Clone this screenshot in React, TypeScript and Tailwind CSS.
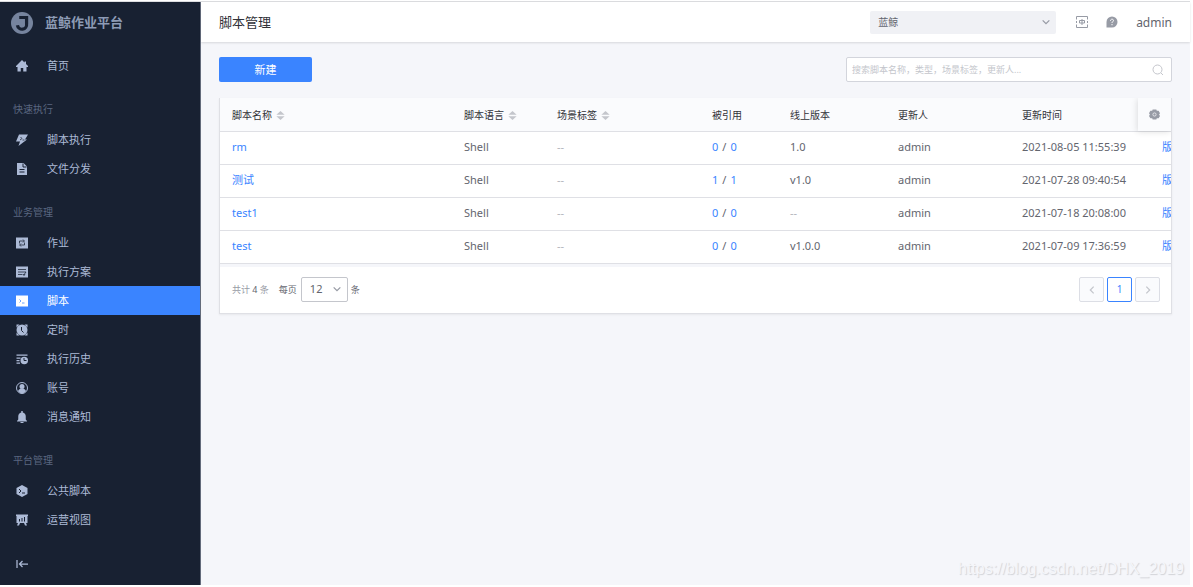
import React from "react";

type IconProps = { className?: string };

const Svg: React.FC<{ className?: string; children: React.ReactNode }> = ({
  className = "size-3",
  children,
}) => (
  <svg viewBox="0 0 24 24" fill="currentColor" className={className} aria-hidden="true">
    {children}
  </svg>
);

const HomeIcon = () => (
  <Svg>
    <path d="M12 0 0 12v2h3v9h6.500v-7h5v7H21v-9h3v-2L20 8V3h-3v2z" />
  </Svg>
);

const FlashIcon = () => (
  <Svg>
    <path d="M6 1h18l-6 10h4L5 24l3-9H0z" />
    <path d="m9 6 3 3-4 3M13 12h4" fill="none" stroke="#182132" strokeWidth="1.500" />
  </Svg>
);

const FileIcon = () => (
  <Svg>
    <path d="M2 0h13l7 7v17H2z" />
    <path d="M14 1v7h7M7 13h10M7 18h10" fill="none" stroke="#182132" strokeWidth="2" />
  </Svg>
);

const JobIcon = () => (
  <Svg>
    <path d="M0 1h24v22H0z" />
    <path
      d="M7 13V8h9M14 5l3 3-3 3M17 11v5H8M10 13l-3 3 3 3"
      fill="none"
      stroke="#182132"
      strokeWidth="1.500"
    />
  </Svg>
);

const PlanIcon = () => (
  <Svg>
    <path d="M0 1h24v22H0z" />
    <path
      d="M4 7h16M4 12h16l-3 4M4 17h8M13 17h5l-3 3"
      fill="none"
      stroke="#182132"
      strokeWidth="1.500"
    />
  </Svg>
);

const ScriptIcon = () => (
  <Svg>
    <path d="M0 1h24v22H0z" />
    <path d="m7 9 3 3-3 3M12 16h5" fill="none" stroke="#3a84ff" strokeWidth="1.500" />
  </Svg>
);

const ClockIcon = () => (
  <Svg>
    <path d="M1 1h6L1 7zM23 1h-6l6 6zM1 23h6l-6-6zM23 23h-6l6-6z" />
    <circle cx="12" cy="12" r="11" />
    <path d="M11 6v7l4 4" fill="none" stroke="#182132" strokeWidth="2" />
  </Svg>
);

const HistoryIcon = () => (
  <Svg>
    <path d="M1 3h22v2.500H1zM1 9h8v2.500H1zM1 14h6v2.500H1zM1 19h7v2.500H1z" />
    <circle cx="16.500" cy="15" r="7.500" />
    <path d="M16 10v5h5" fill="none" stroke="#182132" strokeWidth="2" />
  </Svg>
);

const AccountIcon = () => (
  <Svg>
    <circle cx="12" cy="12" r="11" fill="none" stroke="currentColor" strokeWidth="2" />
    <circle cx="12" cy="9" r="5" />
    <path d="M4 18c2-4 5-5 8-5s6 1 8 5c-2 3-5 5-8 5s-6-2-8-5z" />
  </Svg>
);

const BellIcon = () => (
  <Svg>
    <path d="M10.500 0h3v3c4 1 6 4 6 8v6l2.500 3v1H2v-1l2.500-3v-6c0-4 2-7 6-8zM9 22h6v2H9z" />
  </Svg>
);

const PublicIcon = () => (
  <Svg>
    <path d="m12 0 11 6v12l-11 6-11-6V6z" />
    <path d="m6 8 4 4-4 4M12 16h6" fill="none" stroke="#182132" strokeWidth="2" />
  </Svg>
);

const ChartIcon = () => (
  <Svg>
    <path d="M0 1h24v3h-1v14h-3l2 5h-4l-2-5H8l-2 5H2l2-5H1V4H0z" />
    <path d="M7 10v5M12 8v7M17 6v9" stroke="#182132" strokeWidth="2" />
  </Svg>
);

const CollapseIcon = () => (
  <Svg>
    <path d="M2 4v16M7 12h17M13 6l-6 6 6 6" fill="none" stroke="currentColor" strokeWidth="2.500" />
  </Svg>
);

const LogoIcon = () => (
  <Svg className="size-[22px]">
    <circle cx="12" cy="12" r="12" fill="#76849e" />
    <path d="M9 6h8v7a5 5 0 0 1-10 1.500" fill="none" stroke="#182132" strokeWidth="3.500" />
  </Svg>
);

const LanguageIcon = () => (
  <Svg className="size-3">
    <path
      d="M1 7V1h22v6M1 17v6h22v-6M1 10v4M23 10v4"
      fill="none"
      stroke="currentColor"
      strokeWidth="2"
    />
    <path d="M7 9h10v5H7zM12 6v12" fill="none" stroke="currentColor" strokeWidth="2" />
  </Svg>
);

const HelpIcon = () => (
  <Svg className="size-3">
    <path d="M12 1a11 11 0 1 1 0 22H1V12A11 11 0 0 1 12 1z" />
    <path
      d="M9 9.500c0-4 6-4 6-.5 0 2-3 2.500-3 5M12 16v2.500"
      fill="none"
      stroke="#fff"
      strokeWidth="2"
    />
  </Svg>
);

const GearIcon = () => (
  <Svg className="size-[11px]">
    <path d="M8 1h8l1 3h4l3 5-2 3 2 3-3 5h-4l-1 3H8l-1-3H3l-3-5 2-3-2-3 3-5h4z" />
    <circle cx="12" cy="12" r="3.500" fill="none" stroke="#fafbfd" strokeWidth="1.500" />
  </Svg>
);

const SearchIcon = () => (
  <Svg className="size-3">
    <circle cx="11" cy="11" r="9" fill="none" stroke="currentColor" strokeWidth="2" />
    <path d="m18 18 4 4" stroke="currentColor" strokeWidth="2" />
  </Svg>
);

const Chevron: React.FC<IconProps> = ({ className }) => (
  <Svg className={className}>
    <path d="m4 8 8 8 8-8" fill="none" stroke="currentColor" strokeWidth="3" />
  </Svg>
);

const SortIcon = () => (
  <Svg className="size-[9px] text-[#c4c6cc]">
    <path d="M12 0 23 10H1zM12 24 1 14h22z" />
  </Svg>
);

const groups = [
  { title: "", items: [{ name: "首页", Icon: HomeIcon }] },
  {
    title: "快速执行",
    items: [
      { name: "脚本执行", Icon: FlashIcon },
      { name: "文件分发", Icon: FileIcon },
    ],
  },
  {
    title: "业务管理",
    items: [
      { name: "作业", Icon: JobIcon },
      { name: "执行方案", Icon: PlanIcon },
      { name: "脚本", Icon: ScriptIcon, active: true },
      { name: "定时", Icon: ClockIcon },
      { name: "执行历史", Icon: HistoryIcon },
      { name: "账号", Icon: AccountIcon },
      { name: "消息通知", Icon: BellIcon },
    ],
  },
  {
    title: "平台管理",
    items: [
      { name: "公共脚本", Icon: PublicIcon },
      { name: "运营视图", Icon: ChartIcon },
    ],
  },
];

const columns = [
  { name: "脚本名称", width: "w-[232px]", sort: true },
  { name: "脚本语言", width: "w-[93px]", sort: true },
  { name: "场景标签", width: "w-[155px]", sort: true },
  { name: "被引用", width: "w-[78px]" },
  { name: "线上版本", width: "w-[108px]" },
  { name: "更新人", width: "w-[124px]" },
  { name: "更新时间", width: "w-[140px]" },
];

const scripts = [
  { name: "rm", refs: 0, version: "1.0", time: "2021-08-05 11:55:39" },
  { name: "测试", refs: 1, version: "v1.0", time: "2021-07-28 09:40:54" },
  { name: "test1", refs: 0, version: "", time: "2021-07-18 20:08:00" },
  { name: "test", refs: 0, version: "v1.0.0", time: "2021-07-09 17:36:59" },
];

const Sidebar = () => (
  <aside className="flex w-[201px] shrink-0 flex-col border-r border-[#636b7b] bg-[#182132] text-[#acbad6]">
    <div className="flex h-[42px] items-center gap-3 pl-[11px]">
      <LogoIcon />
      <span className="text-[13px] font-bold text-[#8d9bb5]">蓝鲸作业平台</span>
    </div>
    <nav className="flex-1 pt-[7px]">
      {groups.map((group) => (
        <div key={group.title}>
          {group.title && (
            <h2 className="flex h-[45px] items-center pt-[14px] pl-[13px] text-[10px] text-[#5a6780]">
              {group.title}
            </h2>
          )}
          <ul>
            {group.items.map(({ name, Icon, active }: any) => (
              <li key={name}>
                <a
                  href="#"
                  className={
                    active
                      ? "flex h-[29px] items-center gap-[19px] bg-[#3a84ff] pl-4 text-[11px] text-white"
                      : "flex h-[29px] items-center gap-[19px] pl-4 text-[11px]"
                  }
                >
                  <Icon />
                  <span className="pt-0.5">{name}</span>
                </a>
              </li>
            ))}
          </ul>
        </div>
      ))}
    </nav>
    <button type="button" aria-label="收起" className="flex h-[42px] items-center pl-4">
      <CollapseIcon />
    </button>
  </aside>
);

const Header = () => (
  <header className="flex h-10 items-center justify-between bg-white px-[18px] shadow-[0_1px_2px_rgba(0,0,0,0.12)]">
    <h1 className="pt-0.5 text-[13px] text-[#313238]">脚本管理</h1>
    <div className="flex items-center text-[#979ba5]">
      <div className="relative mr-5">
        <select
          aria-label="业务"
          className="block h-[23px] w-[186px] appearance-none rounded-[2px] bg-[#f0f1f5] pl-2 text-[10px] text-[#63656e]"
        >
          <option>蓝鲸</option>
        </select>
        <Chevron className="pointer-events-none absolute top-[6px] right-[5px] size-[10px]" />
      </div>
      <button type="button" aria-label="语言" className="mr-[18px]">
        <LanguageIcon />
      </button>
      <button type="button" aria-label="帮助" className="mr-[18px]">
        <HelpIcon />
      </button>
      <a href="#" className="pt-0.5 text-xs text-[#63656e]">
        admin
      </a>
    </div>
  </header>
);

const Dash = () => <span className="text-[#b4b6bc]">--</span>;

const ScriptTable = () => (
  <div className="relative overflow-hidden">
    <table className="w-[1030px] min-w-full table-fixed text-left text-[11px] text-[#63656e]">
      <thead>
        <tr className="h-[33px] border-b border-[#dfe0e5] bg-[#fafbfd]">
          {columns.map((col) => (
            <th
              key={col.name}
              className={`${col.width} pt-0.5 pl-3 text-[10px] font-normal text-[#313238]`}
            >
              <div className="flex items-center gap-1">
                {col.name}
                {col.sort && <SortIcon />}
              </div>
            </th>
          ))}
          <th className="w-[100px]" />
        </tr>
      </thead>
      <tbody>
        {scripts.map((script) => (
          <tr key={script.name} className="h-[33px] border-b border-[#dfe0e5]">
            <td className="pl-3">
              <a href="#" className="text-[#3a84ff]">
                {script.name}
              </a>
            </td>
            <td className="pl-3">Shell</td>
            <td className="pl-3">
              <Dash />
            </td>
            <td className="pl-3">
              <div className="flex gap-1">
                <a href="#" className="text-[#3a84ff]">
                  {script.refs}
                </a>
                <span>/</span>
                <a href="#" className="text-[#3a84ff]">
                  {script.refs}
                </a>
              </div>
            </td>
            <td className="pl-3">{script.version || <Dash />}</td>
            <td className="pl-3">admin</td>
            <td className="pl-3">{script.time}</td>
            <td className="pl-3 whitespace-nowrap">
              <a href="#" className="text-[#3a84ff]">
                版
              </a>
            </td>
          </tr>
        ))}
      </tbody>
    </table>
    <button
      type="button"
      aria-label="设置"
      className="absolute top-0 right-0 flex h-[33px] w-[33px] items-center justify-center bg-[#fafbfd] text-[#979ba5] shadow-[-1px_1px_6px_rgba(0,0,0,0.12)]"
    >
      <GearIcon />
    </button>
  </div>
);

const Pagination = () => (
  <div className="flex h-[46px] items-center justify-between pr-[11px] pl-3 text-[9px] text-[#63656e]">
    <div className="flex items-center">
      <span className="text-[#979ba5]">
        共计 <span className="text-[#63656e]">4</span> 条
      </span>
      <label htmlFor="page-size" className="mr-1 ml-[10px]">
        每页
      </label>
      <div className="relative mr-[3px]">
        <select
          id="page-size"
          className="block h-[25px] w-[47px] appearance-none rounded-[2px] border border-[#c4c6cc] bg-white pl-2 text-[11px]"
        >
          <option>12</option>
        </select>
        <Chevron className="pointer-events-none absolute top-[7px] right-[6px] size-[10px] text-[#979ba5]" />
      </div>
      <span>条</span>
    </div>
    <div className="flex gap-[3px]">
      <button
        type="button"
        aria-label="上一页"
        className="flex size-[25px] items-center justify-center rounded-[2px] border border-[#dcdee5] bg-[#fafbfd] text-[#c4c6cc]"
      >
        <Chevron className="size-[10px] rotate-90" />
      </button>
      <button
        type="button"
        className="size-[25px] rounded-[2px] border border-[#3a84ff] bg-white text-[10px] text-[#3a84ff]"
      >
        1
      </button>
      <button
        type="button"
        aria-label="下一页"
        className="flex size-[25px] items-center justify-center rounded-[2px] border border-[#dcdee5] bg-[#fafbfd] text-[#c4c6cc]"
      >
        <Chevron className="size-[10px] -rotate-90" />
      </button>
    </div>
  </div>
);

const App: React.FC = () => {
  return (
    <div className="flex min-h-screen flex-col bg-white pt-px pr-[3px] pb-[2px] font-['Noto_Sans','Noto_Sans_CJK_SC',sans-serif]">
      <div className="flex flex-1 border-t border-[#dcdde0]">
        <Sidebar />
        <div className="relative min-w-0 flex-1 bg-[#f5f6fa]">
          <Header />
          <main className="px-[18px] pt-[15px]">
            <div className="mb-4 flex justify-between">
              <button
                type="button"
                className="h-[25px] w-[93px] rounded-[2px] bg-[#3a84ff] pt-0.5 text-[11px] text-white"
              >
                新建
              </button>
              <div className="flex h-[25px] w-[326px] items-center rounded-[2px] border border-[#d3d5dc] bg-white pr-[7px] pl-[5px] text-[#c4c6cc]">
                <input
                  type="text"
                  aria-label="搜索"
                  placeholder="搜索脚本名称，类型，场景标签，更新人..."
                  className="min-w-0 flex-1 text-[9px] outline-none placeholder:text-[#c4c6cc]"
                />
                <SearchIcon />
              </div>
            </div>
            <section className="border-r border-b border-l border-[#dfe0e5] bg-white shadow-[0_1px_2px_rgba(0,0,0,0.06)]">
              <ScriptTable />
              <div className="h-[3px] bg-[#f5f6fa]" />
              <Pagination />
            </section>
          </main>
          <span className="absolute right-[6px] bottom-1 font-['Liberation_Sans',sans-serif] text-base text-[#f5f6fa] [text-shadow:1px_1px_1px_#d0d2d7]">
            https://blog.csdn.net/DHX_2019
          </span>
        </div>
      </div>
    </div>
  );
};

export default App;
